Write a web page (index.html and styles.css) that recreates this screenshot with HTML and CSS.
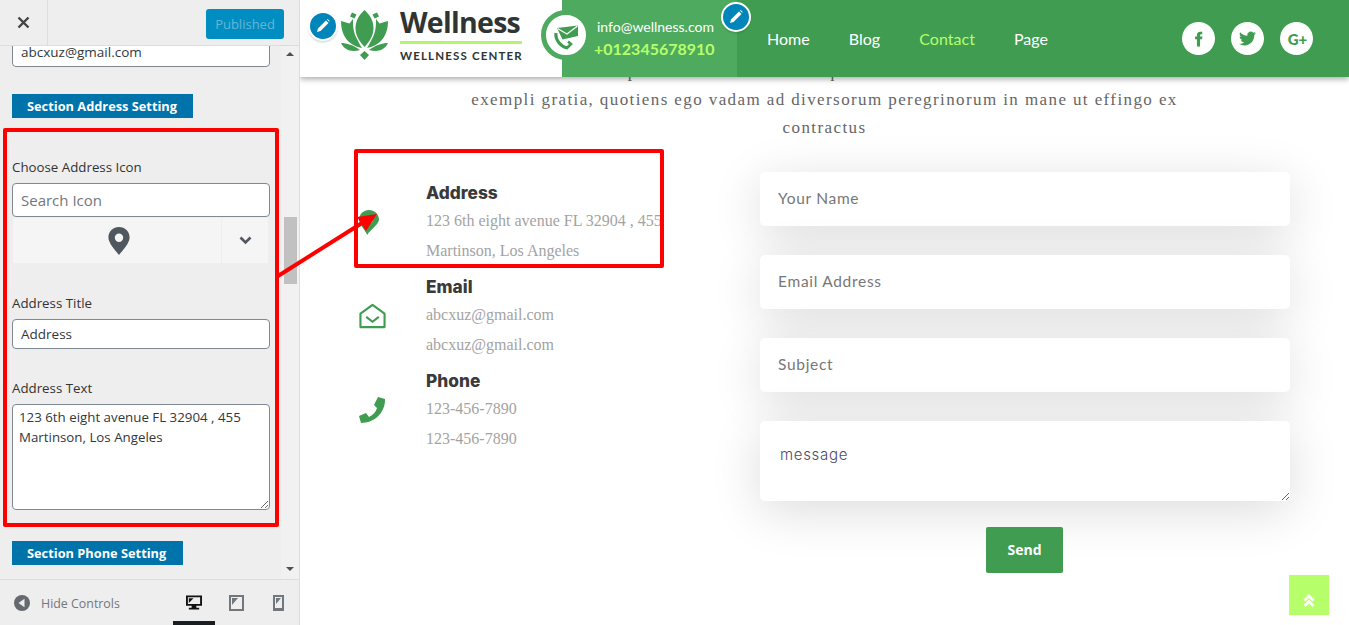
FILE: index.html
```html
<!DOCTYPE html>
<html lang="en">
<head>
  <meta charset="UTF-8">
  <meta name="viewport" content="width=device-width, initial-scale=1.0">
  <title>Wellness - Customizer</title>
  <link rel="stylesheet" href="styles.css">
</head>
<body>

<aside class="sidebar">
  <div class="side-top">
    <div class="close-btn">
      <svg width="13" height="13" viewBox="0 0 13 13"><path d="M1.5 1.5l10 10M11.5 1.5l-10 10" stroke="#444" stroke-width="2.4" fill="none"/></svg>
    </div>
    <div class="publish">Published</div>
  </div>

  <div class="side-scroll">
    <div class="side-panel">
      <input class="field first-field" type="text" value="abcxuz@gmail.com">
      <div class="section-tag section-address">Section Address Setting</div>

      <label class="side-label label-icon">Choose Address Icon</label>
      <input class="field search-field" type="text" placeholder="Search Icon">
      <div class="icon-picker">
        <div class="icon-current">
          <svg width="22" height="28" viewBox="0 0 22 28"><path fill-rule="evenodd" fill="#50575e" d="M11 0C5 0 .4 4.600.4 10.500.4 16 7 23 11 28c4-5 10.600-12 10.600-17.500C21.600 4.600 17 0 11 0zm0 6.500a4.200 4.200 0 1 1 0 8.400 4.200 4.200 0 0 1 0-8.400z"/></svg>
        </div>
        <div class="icon-arrow">
          <svg width="13" height="9" viewBox="0 0 13 9"><path d="M1.500 1.500l5 5 5-5" stroke="#50575e" stroke-width="2.600" fill="none"/></svg>
        </div>
      </div>

      <label class="side-label label-title">Address Title</label>
      <input class="field" type="text" value="Address">

      <label class="side-label label-text">Address Text</label>
      <textarea class="field area-field">123 6th eight avenue FL 32904 , 455 Martinson, Los Angeles</textarea>

      <div class="section-tag section-phone">Section Phone Setting</div>
    </div>

    <div class="scrollbar">
      <span class="scroll-up"></span>
      <span class="scroll-thumb"></span>
      <span class="scroll-down"></span>
    </div>
  </div>

  <div class="side-foot">
    <div class="hide-controls">
      <svg width="16" height="16" viewBox="0 0 16 16"><circle cx="8" cy="8" r="8" fill="#656a70"/><path d="M10.500 3.800v8.400L4.500 8z" fill="#eee"/></svg>
      <span>Hide Controls</span>
    </div>
    <div class="devices">
      <div class="device active">
        <svg width="16" height="16" viewBox="0 0 17 16"><path fill-rule="evenodd" fill="#111" d="M0 0h17v11h-6v2h3v2H3v-2h3v-2H0zm2 2v7h13V2zm1 1h5L3 8z"/></svg>
      </div>
      <div class="device">
        <svg width="15" height="16" viewBox="0 0 15 16"><path fill-rule="evenodd" fill="#72777c" d="M0 0h15v16H0zm2 2v12h11V2zm1 1h6L3 10z"/></svg>
      </div>
      <div class="device">
        <svg width="11" height="16" viewBox="0 0 11 16"><path fill-rule="evenodd" fill="#72777c" d="M0 0h11v16H0zm2 2v11h7V2zm1 1h5L3 9z"/></svg>
      </div>
    </div>
  </div>
</aside>

<main class="site">
  <header class="site-header">
    <div class="logo">
      <svg class="lotus" width="51" height="50" viewBox="0 0 51 50">
        <g fill="#3f9c51">
          <path d="M25.500 0C31 5 34.500 11 34.500 18 34.500 26 30 32 25.500 37 21 32 16.500 26 16.500 18 16.500 11 20 5 25.500 0z"/>
          <path d="M2 11L10.500 13.500 14 9C14 14 14 21 17 27 19 31 20.500 34 23 38 12 36 2 28 2 11z"/>
          <path d="M13 2.500L17.500 4.500 15.500 8.500 11 6.500z"/>
          <path d="M2 33C8 33 14 35 21 40 13 42 6 41 2 33z"/>
          <g transform="translate(51 0) scale(-1 1)">
            <path d="M2 11L10.500 13.500 14 9C14 14 14 21 17 27 19 31 20.500 34 23 38 12 36 2 28 2 11z"/>
            <path d="M13 2.500L17.500 4.500 15.500 8.500 11 6.500z"/>
            <path d="M2 33C8 33 14 35 21 40 13 42 6 41 2 33z"/>
          </g>
          <path d="M25.500 41L30 45 25.500 50 21 45z"/>
        </g>
      </svg>
      <div class="logo-text">
        <div class="logo-name">Wellness</div>
        <div class="logo-sub">WELLNESS CENTER</div>
      </div>
      <span class="edit-btn edit-logo">
        <svg width="14" height="14" viewBox="0 0 14 14"><path fill="#fff" d="M10 1.500l2.500 2.500-8 8L1 13l1-3.500zM11 .5l.7-.5 2 2-.5.8z"/></svg>
      </span>
    </div>

    <div class="head-contact">
      <span class="contact-circle">
        <svg width="32" height="32" viewBox="0 0 32 32">
          <path fill="#3f9c51" d="M7 9L28 6.500V17L12.500 20.500z"/>
          <path d="M7.500 9.500L17 15 27.500 7" stroke="#fff" stroke-width="1.200" fill="none"/>
          <path fill="none" stroke="#3f9c51" stroke-width="3.200" d="M6 14C5 21 11 28 18 29"/>
          <path fill="none" stroke="#3f9c51" stroke-width="2.600" d="M17 29l4-4-3-2.500"/>
        </svg>
      </span>
      <div class="contact-mail">info@wellness.com</div>
      <div class="contact-phone">+012345678910</div>
      <span class="edit-btn edit-contact">
        <svg width="14" height="14" viewBox="0 0 14 14"><path fill="#fff" d="M10 1.500l2.500 2.500-8 8L1 13l1-3.500zM11 .5l.7-.5 2 2-.5.8z"/></svg>
      </span>
    </div>

    <nav class="nav">
      <a href="#">Home</a>
      <a href="#">Blog</a>
      <a href="#" class="current">Contact</a>
      <a href="#">Page</a>
    </nav>

    <div class="socials">
      <a href="#"><svg width="15" height="16" viewBox="0 0 24 24"><path fill="#3f9c51" d="M14.500 8V5.800c0-1 .5-1.300 1.300-1.300H18V.5h-3.300C11 .5 9.500 2.800 9.500 5.500V8H6.500v4.200h3V24h5V12.200h3.200L18.200 8z"/></svg></a>
      <a href="#"><svg width="17" height="17" viewBox="0 0 24 24"><path fill="#3f9c51" d="M23.953 4.570a10 10 0 01-2.825.775 4.958 4.958 0 002.163-2.723c-.951.555-2.005.959-3.127 1.184a4.920 4.920 0 00-8.384 4.482C7.690 8.095 4.067 6.130 1.640 3.162a4.822 4.822 0 00-.666 2.475c0 1.710.870 3.213 2.188 4.096a4.904 4.904 0 01-2.228-.616v.060a4.923 4.923 0 003.946 4.827 4.996 4.996 0 01-2.212.085 4.936 4.936 0 004.604 3.417 9.867 9.867 0 01-6.102 2.105c-.390 0-.779-.023-1.170-.067a13.995 13.995 0 007.557 2.209c9.053 0 13.998-7.496 13.998-13.985 0-.210 0-.420-.015-.630A9.935 9.935 0 0024 4.590z"/></svg></a>
      <a href="#" class="gplus">G+</a>
    </div>
  </header>

  <section class="contact-page">
    <p class="intro">Ut commodo at adipis enim commodo tristique architecto nisi delectus vero et veniam<br>exempli gratia, quotiens ego vadam ad diversorum peregrinorum in mane ut effingo ex<br>contractus</p>

    <div class="contact-row">
      <div class="info-col">
        <div class="info-item">
          <div class="info-icon">
            <svg width="20" height="25" viewBox="0 0 22 26" preserveAspectRatio="none"><path fill-rule="evenodd" fill="#3f9c51" d="M11 0C5 0 0 4.500 0 10c0 5 7 11 9 16 3-5 13-11 13-16C22 4.500 17 0 11 0zm0 6a4 4 0 1 1 0 8 4 4 0 0 1 0-8z"/></svg>
          </div>
          <div>
            <h3>Address</h3>
            <p>123 6th eight avenue FL 32904 , 455<br>Martinson, Los Angeles</p>
          </div>
        </div>
        <div class="info-item">
          <div class="info-icon">
            <svg width="27" height="26" viewBox="0 0 28 26"><path d="M14 1.500L26.500 10.500V24.500H1.500V10.500z" fill="none" stroke="#3f9c51" stroke-width="2.200" stroke-linejoin="round"/><path d="M7.500 14l6.500 5 6.500-5" fill="none" stroke="#3f9c51" stroke-width="2.200"/></svg>
          </div>
          <div>
            <h3>Email</h3>
            <p>abcxuz@gmail.com<br>abcxuz@gmail.com</p>
          </div>
        </div>
        <div class="info-item">
          <div class="info-icon">
            <svg width="26" height="26" viewBox="0 0 26 26"><path fill="#3f9c51" d="M19 0l7 2c.5 13-10 24-24 24L0 19l7-3 3 4c4-2 7-5 8-9l-3-3z"/></svg>
          </div>
          <div>
            <h3>Phone</h3>
            <p>123-456-7890<br>123-456-7890</p>
          </div>
        </div>
      </div>

      <form class="contact-form">
        <input type="text" placeholder="Your Name">
        <input type="text" placeholder="Email Address">
        <input type="text" placeholder="Subject">
        <textarea placeholder="message"></textarea>
        <button type="button">Send</button>
      </form>
    </div>
  </section>

  <a href="#" class="to-top">
    <svg width="12" height="14" viewBox="0 0 12 14"><path d="M1.500 6.500L6 2l4.500 4.500M1.500 12L6 7.500l4.500 4.500" stroke="#fff" stroke-width="2.800" fill="none"/></svg>
  </a>
</main>

<!-- red markers drawn on top of the screenshot -->
<div class="mark mark-side"></div>
<div class="mark mark-page"></div>
<svg class="mark-arrow" width="1349" height="625" viewBox="0 0 1349 625">
  <path d="M278 276L362 223" stroke="#f00" stroke-width="4" fill="none"/>
  <path d="M377 214L357 217 366 231z" fill="#f00"/>
</svg>

</body>
</html>
```

FILE: styles.css
```css
* {
  box-sizing: border-box;
}

html, body {
  height: 625px;
  margin: 0;
  overflow: hidden;
}

body {
  display: flex;
  font-family: "Open Sans", sans-serif;
  background-color: #fff;
}

a {
  text-decoration: none;
}

/* customizer sidebar */
.sidebar {
  width: 300px;
  height: 625px;
  flex: none;
  display: flex;
  flex-direction: column;
  background-color: #eee;
  border-right: 1px solid #ddd;
}

.side-top {
  height: 46px;
  flex: none;
  display: flex;
  align-items: flex-start;
  justify-content: space-between;
  background-color: #eee;
  border-bottom: 1px solid #ddd;
  position: relative;
  z-index: 2;
}

.close-btn {
  width: 48px;
  height: 45px;
  display: flex;
  align-items: center;
  justify-content: center;
  border-right: 1px solid #ddd;
}

.publish {
  width: 78px;
  height: 30px;
  margin: 9px 15px 0 0;
  background-color: #008ec2;
  border-radius: 3px;
  color: #65b5d6;
  font-size: 13px;
  line-height: 30px;
  text-align: center;
}

.side-scroll {
  flex: 1;
  min-height: 0;
  display: flex;
  overflow: hidden;
}

.side-panel {
  flex: 1;
  min-width: 0;
  padding-left: 12px;
}

.field {
  display: block;
  width: 258px;
  height: 30px;
  padding: 0 8px;
  background-color: #fff;
  border: 1px solid #7e8993;
  border-radius: 4px;
  color: #32373c;
  font-family: "Open Sans", sans-serif;
  font-size: 13.500px;
}

.first-field {
  margin-top: -9px;
}

.search-field {
  height: 34px;
  padding: 0 8px;
  font-size: 15px;
}

.search-field::placeholder {
  color: #72777c;
}

.area-field {
  height: 106px;
  padding: 2px 6px;
  font-size: 13.300px;
  line-height: 20px;
  resize: vertical;
}

.section-tag {
  height: 24px;
  padding-left: 15px;
  background-color: #0073aa;
  color: #fff;
  font-size: 12.800px;
  font-weight: 700;
  line-height: 24px;
}

.section-address {
  width: 181px;
  margin-top: 27px;
}

.section-phone {
  width: 171px;
  margin-top: 31px;
}

.side-label {
  display: block;
  height: 18px;
  margin-bottom: 7px;
  color: #333;
  font-size: 13.300px;
  font-weight: 500;
  line-height: 18px;
}

.label-icon {
  margin-top: 40px;
}

.label-title {
  margin-top: 31px;
}

.label-text {
  margin-top: 30px;
}

.icon-picker {
  width: 255px;
  height: 45px;
  margin: 1px 0 0 1px;
  display: flex;
  background-color: #f5f5f5;
}

.icon-current {
  flex: 1;
  display: flex;
  align-items: center;
  justify-content: center;
  padding-left: 4px;
  border-right: 1px solid #eee;
}

.icon-arrow {
  width: 46px;
  display: flex;
  align-items: center;
  justify-content: center;
}

.scrollbar {
  width: 18px;
  flex: none;
  padding: 0 2px;
  display: flex;
  flex-direction: column;
  align-items: center;
  background-color: #f1f1f1;
}

.scroll-up,
.scroll-down {
  width: 0;
  height: 0;
  border-left: 4px solid transparent;
  border-right: 4px solid transparent;
}

.scroll-up {
  margin-top: 6px;
  border-bottom: 4px solid #505050;
}

.scroll-down {
  margin-top: 283px;
  border-top: 4px solid #505050;
}

.scroll-thumb {
  width: 13px;
  height: 67px;
  margin-top: 161px;
  background-color: #c1c1c1;
}

.side-foot {
  height: 46px;
  flex: none;
  display: flex;
  justify-content: space-between;
  background-color: #eee;
  border-top: 1px solid #ddd;
}

.hide-controls {
  display: flex;
  align-items: center;
  gap: 11px;
  padding: 1px 0 0 14px;
  color: #72777c;
  font-size: 12.400px;
}

.devices {
  display: flex;
}

.device {
  width: 42px;
  display: flex;
  align-items: center;
  justify-content: center;
  padding-top: 4px;
  border-bottom: 4px solid transparent;
}

.device.active {
  border-bottom-color: #191e23;
}

/* site preview */
.site {
  flex: 1;
  min-width: 0;
  height: 625px;
  position: relative;
  overflow: hidden;
}

.site-header {
  position: absolute;
  top: 0;
  left: 0;
  right: 0;
  height: 77px;
  display: flex;
  background-color: #3f9c51;
  box-shadow: 0 2px 6px rgba(0, 0, 0, 0.35);
  z-index: 3;
}

.logo {
  width: 262px;
  flex: none;
  display: flex;
  align-items: flex-start;
  gap: 10px;
  padding: 10px 0 0 39px;
  background-color: #fff;
}

.logo-name {
  width: 122px;
  height: 33px;
  color: #2e3532;
  font-family: "Open Sans", sans-serif;
  font-size: 28.500px;
  font-weight: 700;
  line-height: 24px;
  letter-spacing: -0.700px;
}

.logo-sub {
  width: 122px;
  margin-top: -2px;
  padding-top: 5px;
  border-top: 3px solid #b5f56b;
  color: #2e3532;
  font-family: Lato, sans-serif;
  font-size: 11.500px;
  font-weight: 700;
  letter-spacing: 1.150px;
  white-space: nowrap;
}

.edit-btn {
  position: absolute;
  width: 30px;
  height: 30px;
  display: flex;
  align-items: center;
  justify-content: center;
  background-color: #0085ba;
  border: 2px solid #fff;
  border-radius: 50%;
  box-shadow: 0 2px 1px rgba(46, 68, 83, 0.15);
  z-index: 4;
}

.edit-logo {
  left: 8px;
  top: 11px;
}

.edit-contact {
  left: 421px;
  top: 2px;
}

.head-contact {
  width: 175px;
  flex: none;
  padding: 17px 0 0 32px;
  background-color: #4eaa5e;
  font-family: Lato, sans-serif;
}

.contact-circle {
  position: absolute;
  left: 241px;
  top: 10px;
  width: 50px;
  height: 50px;
  display: flex;
  align-items: center;
  justify-content: center;
  background-color: #fff;
  border: 5px solid #4eaa5e;
  border-radius: 50%;
}

.contact-mail {
  margin-left: 3px;
  color: #fff;
  font-size: 14px;
  line-height: 19px;
}

.contact-phone {
  margin-top: 2px;
  color: #b6ff6a;
  font-size: 16px;
  font-weight: 700;
  line-height: 22px;
  white-space: nowrap;
}

.nav {
  display: flex;
  align-items: center;
  gap: 39px;
  padding-left: 30px;
  font-family: Lato, sans-serif;
  font-size: 16px;
  letter-spacing: 0.030px;
}

.nav a {
  color: #fff;
}

.nav a.current {
  color: #b6ff6a;
}

.socials {
  display: flex;
  align-items: center;
  gap: 16px;
  margin-left: auto;
  padding-right: 36px;
}

.socials a {
  width: 33px;
  height: 33px;
  display: flex;
  align-items: center;
  justify-content: center;
  background-color: #fff;
  border-radius: 50%;
}

.socials .gplus {
  padding-left: 2px;
  color: #3f9c51;
  font-family: Lato, sans-serif;
  font-size: 15px;
  font-weight: 900;
}

.contact-page {
  padding-top: 58px;
}

.intro {
  margin: 0;
  color: #666;
  font-family: "Liberation Serif", serif;
  font-size: 17px;
  line-height: 28px;
  letter-spacing: 1.400px;
  text-align: center;
  white-space: nowrap;
}

.contact-row {
  display: flex;
  margin-top: 30px;
  padding-left: 58px;
}

.info-col {
  width: 402px;
  flex: none;
  padding-top: 6px;
}

.info-item {
  display: flex;
  align-items: center;
  margin-bottom: 6px;
}

.info-icon {
  width: 68px;
  flex: none;
  display: flex;
  padding-left: 1px;
}

.info-item h3 {
  margin: 0;
  padding-top: 1px;
  color: #3a3a3a;
  font-family: Inter, sans-serif;
  font-size: 17.300px;
  font-weight: 800;
  line-height: 27px;
}

.info-item p {
  margin: 0;
  color: #a3a3a3;
  font-family: "Liberation Serif", serif;
  font-size: 16px;
  line-height: 30px;
  white-space: nowrap;
}

.contact-form {
  width: 530px;
  flex: none;
  display: flex;
  flex-direction: column;
  align-items: center;
}

.contact-form input,
.contact-form textarea {
  display: block;
  width: 100%;
  height: 54px;
  margin-bottom: 29px;
  padding: 0 18px 2px;
  background-color: #fff;
  border: 0;
  border-radius: 5px;
  box-shadow: 0 10px 50px rgba(0, 0, 0, 0.14);
  color: #777;
  font-family: Lato, sans-serif;
  font-size: 15.500px;
  letter-spacing: 0.700px;
  outline: none;
}

.contact-form input::placeholder {
  color: #777;
}

.contact-form textarea {
  height: 80px;
  margin-bottom: 26px;
  padding: 24px 20px 0;
  font-family: Inter, sans-serif;
  font-size: 15px;
  font-weight: 300;
  letter-spacing: 0.700px;
}

.contact-form textarea::placeholder {
  color: #4a4a6a;
}

.contact-form button {
  width: 77px;
  height: 46px;
  margin-right: 1px;
  padding-bottom: 2px;
  background-color: #3f9c51;
  border: none;
  border-radius: 2px;
  color: #fff;
  font-family: "Open Sans", sans-serif;
  font-size: 14px;
  font-weight: 700;
  cursor: pointer;
  position: relative;
}

.to-top {
  position: absolute;
  left: 989px;
  top: 575px;
  width: 40px;
  height: 40px;
  display: flex;
  align-items: flex-end;
  justify-content: center;
  padding-bottom: 7px;
  background-color: #b6ff6a;
}

/* red markers */
.mark {
  position: absolute;
  border: 4px solid #f00;
  border-radius: 2px;
  z-index: 5;
}

.mark-side {
  left: 3px;
  top: 128px;
  width: 276px;
  height: 399px;
}

.mark-page {
  left: 354px;
  top: 149px;
  width: 310px;
  height: 119px;
}

.mark-arrow {
  position: absolute;
  left: 0;
  top: 0;
  z-index: 6;
  pointer-events: none;
}
```
